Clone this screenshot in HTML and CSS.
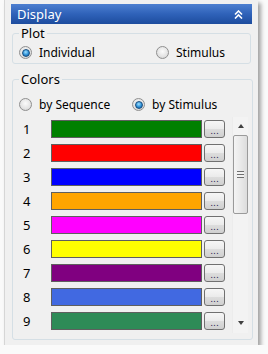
FILE: index.html
```html
<!DOCTYPE html>
<html>
<head>
    <meta charset="UTF-8">
    <title>Display</title>
    <link rel="stylesheet" href="styles.css">
</head>
<body>
<div class="window">
    <div class="header">
        <span class="title">Display</span>
        <svg class="collapse" width="9" height="9" viewBox="0 0 9 9">
            <path d="M1 4.5 L4.5 1 L8 4.5 M1 8.5 L4.5 5 L8 8.5" fill="none" stroke="#fff" stroke-width="1.6"/>
        </svg>
    </div>

    <fieldset class="group plot">
        <legend>Plot</legend>
        <div class="choices">
            <label class="choice first"><span class="radio checked"></span>Individual</label>
            <label class="choice"><span class="radio"></span>Stimulus</label>
        </div>
    </fieldset>

    <fieldset class="group colors">
        <legend>Colors</legend>
        <div class="choices">
            <label class="choice seq"><span class="radio"></span>by Sequence</label>
            <label class="choice"><span class="radio checked"></span>by Stimulus</label>
        </div>
        <div class="listbox">
            <div class="rows">
                <div class="row"><span class="num">1</span><span class="swatch" style="background:#008000"></span><span class="pick">...</span></div>
                <div class="row"><span class="num">2</span><span class="swatch" style="background:#ff0000"></span><span class="pick">...</span></div>
                <div class="row"><span class="num">3</span><span class="swatch" style="background:#0000ff"></span><span class="pick">...</span></div>
                <div class="row"><span class="num">4</span><span class="swatch" style="background:#ffa500"></span><span class="pick">...</span></div>
                <div class="row"><span class="num">5</span><span class="swatch" style="background:#ff00ff"></span><span class="pick">...</span></div>
                <div class="row"><span class="num">6</span><span class="swatch" style="background:#ffff00"></span><span class="pick">...</span></div>
                <div class="row"><span class="num">7</span><span class="swatch" style="background:#800080"></span><span class="pick">...</span></div>
                <div class="row"><span class="num">8</span><span class="swatch" style="background:#4169e1"></span><span class="pick">...</span></div>
                <div class="row"><span class="num">9</span><span class="swatch" style="background:#2e8b57"></span><span class="pick">...</span></div>
            </div>
            <div class="scrollbar">
                <span class="arrow up"></span>
                <div class="thumb"><span class="grip"></span></div>
                <span class="arrow down"></span>
            </div>
        </div>
    </fieldset>
</div>
</body>
</html>
```

FILE: styles.css
```css
body {
    margin: 0;
    background: #fafafa;
    font-family: "Noto Sans", "Liberation Sans", sans-serif;
    font-size: 12px;
    color: #000;
}

.window {
    width: 241px;
    height: 340px;
    margin-left: 4px;
    padding: 4px 6px 1px 6px;
    background: #f0f0f0;
    border-left: 1px solid #d6d6d6;
    box-shadow: 3px 3px 4px rgba(0, 0, 0, 0.35);
}

.header {
    height: 20px;
    display: flex;
    align-items: center;
    justify-content: space-between;
    padding: 0 9px 0 6px;
    background: linear-gradient(to bottom, #4d7fd0 0%, #2f62b9 50%, #1d4c9e 100%);
    color: #fff;
    font-size: 13px;
}

.group {
    margin: 1px 1px 0 1px;
    padding: 0 4px 3px 6px;
    border: 1px solid #d5dfe5;
    border-radius: 3px;
}

.group legend {
    padding: 0 2px;
    height: 16px;
    line-height: 16px;
    font-size: 13px;
}

.colors {
    margin-top: 7px;
    padding-bottom: 6px;
}

.choices {
    display: flex;
    height: 16px;
    align-items: center;
    margin-top: 3px;
}

.colors .choices {
    margin-top: 9px;
    margin-bottom: 5px;
}

.choice {
    display: flex;
    align-items: center;
    font-size: 12px;
}

.choice.first {
    width: 137px;
}

.choice.seq {
    width: 113px;
}

.radio {
    position: relative;
    width: 11px;
    height: 11px;
    margin-right: 7px;
    border: 1px solid #8f8f8f;
    border-radius: 50%;
    background: radial-gradient(circle at 50% 40%, #fbfbfb 0%, #e3e3e3 60%, #c9c9c9 100%);
}

.radio.checked::after {
    content: "";
    position: absolute;
    left: 2px;
    top: 2px;
    width: 6px;
    height: 6px;
    border: 0.5px solid #1c4f7f;
    border-radius: 50%;
    background: radial-gradient(circle at 45% 35%, #9fe0ff 0%, #2b8fd6 55%, #0f4f8c 100%);
}

.listbox {
    display: flex;
    height: 216px;
    overflow: hidden;
}

.rows {
    width: 206px;
}

.row {
    display: flex;
    align-items: center;
    height: 24px;
}

.num {
    width: 28px;
    padding-left: 4px;
    font-size: 13px;
}

.swatch {
    width: 150px;
    height: 16px;
    border: 1px solid #5f5f5f;
}

.pick {
    width: 19px;
    height: 16px;
    margin-left: 2px;
    border: 1px solid #707070;
    border-radius: 3px;
    background: linear-gradient(to bottom, #f6f6f6 0%, #ebebeb 50%, #dddddd 51%, #cfcfcf 100%);
    font-family: "DejaVu Sans", sans-serif;
    font-size: 9px;
    line-height: 21px;
    text-align: center;
    letter-spacing: 0;
    color: #2a2050;
    overflow: hidden;
}

.scrollbar {
    width: 15px;
    margin-left: 7px;
    display: flex;
    flex-direction: column;
    align-items: center;
    background: #f3f3f3;
    border-left: 1px solid #ececec;
}

.arrow {
    width: 0;
    height: 0;
    border-left: 3px solid transparent;
    border-right: 3px solid transparent;
}

.arrow.up {
    margin: 7px 0 7px;
    border-bottom: 4px solid #404040;
}

.arrow.down {
    margin-top: auto;
    margin-bottom: 8px;
    border-top: 4px solid #404040;
}

.thumb {
    width: 13px;
    height: 77px;
    display: flex;
    align-items: center;
    justify-content: center;
    border: 1px solid #9a9a9a;
    border-radius: 2px;
    background: linear-gradient(to right, #f4f4f4 0%, #e9e9e9 50%, #dcdcdc 100%);
}

.grip {
    width: 7px;
    height: 5px;
    border-top: 1px solid #6f6f6f;
    border-bottom: 1px solid #6f6f6f;
    background: linear-gradient(#f2f2f2 0, #f2f2f2 2px, #6f6f6f 2px, #6f6f6f 3px, #f2f2f2 3px);
}
```
